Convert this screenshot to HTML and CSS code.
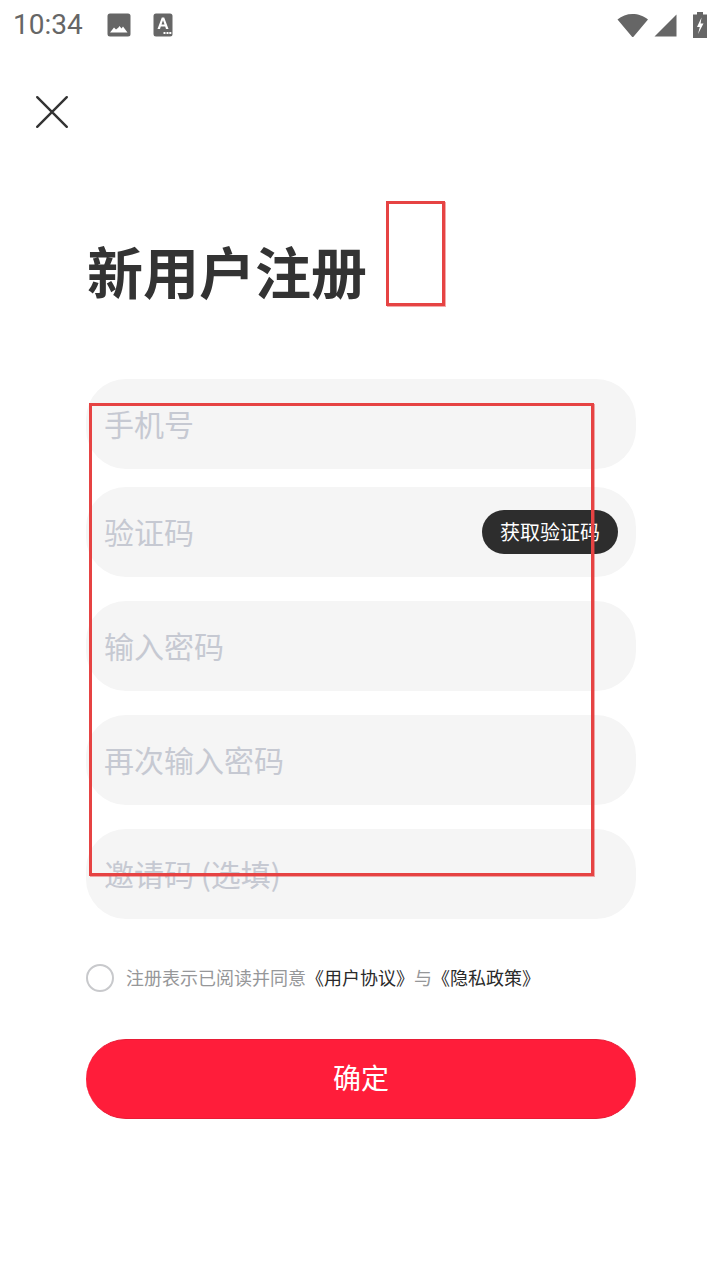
FILE: index.html
```html
<!DOCTYPE html>
<html lang="zh">
<head>
<meta charset="utf-8">
<title>新用户注册</title>
<link rel="stylesheet" href="styles.css">
</head>
<body>
<div class="screen">
  <header class="status">
    <span class="time">10:34</span>
    <svg class="ic-img" viewBox="0 0 24 24"><rect x="0.500" y="0.500" width="23" height="23" rx="2.500" fill="#666"/><path d="M3 19.500l4-5 2 2 2.500-2 1-1.500 2 2.500 1.500-2 4.500 6z" fill="#fff"/></svg>
    <svg class="ic-a" viewBox="0 0 20 24"><rect x="0.500" y="0.500" width="19" height="23" rx="2.500" fill="#666"/><path d="M4.500 16L8.800 4.500h2.400L15.500 16h-2.500l-.8-2.500H7.800L7 16zM8.500 11.500h3L10 7.300z" fill="#fff"/><path d="M10.500 19h2v2h-2zM13.500 19h2v2h-2zM16.300 19h2v2h-2z" fill="#fff"/></svg>
    <span class="status-right">
      <svg class="ic-wifi" viewBox="0 0 32 24"><path d="M0.500 6.500C4.500 3 10 1 15.500 1S27 3 31 6.500L16.700 23.500a1.200 1.200 0 0 1-1.900 0z" fill="#666"/></svg>
      <svg class="ic-signal" viewBox="0 0 23 23"><path d="M22.500 0.500V22.500H0.500z" fill="#666"/></svg>
      <svg class="ic-batt" viewBox="0 0 14 26"><path d="M4 0h6v2.500h4V26H0V2.500h4z" fill="#666"/><path d="M8.500 5.500L4 15h2.800L5 22l5.500-10.500H7.600z" fill="#fff"/></svg>
    </span>
  </header>

  <button class="close" aria-label="关闭">
    <svg viewBox="0 0 34 34"><path d="M2.200 2.200l29.600 29.600M31.800 2.200L2.200 31.800" fill="none" stroke="#333" stroke-width="2.400" stroke-linecap="round"/></svg>
  </button>

  <h1 class="title">新用户注册</h1>

  <form class="form">
    <div class="field"><span class="ph">手机号</span></div>
    <div class="field"><span class="ph">验证码</span><span class="code-btn">获取验证码</span></div>
    <div class="field"><span class="ph">输入密码</span></div>
    <div class="field"><span class="ph">再次输入密码</span></div>
    <div class="field"><span class="ph">邀请码 (选填)</span></div>

    <div class="agree">
      <span class="radio"></span>
      <span class="agree-text">注册表示已阅读并同意<b>《用户协议》</b>与<b>《隐私政策》</b></span>
    </div>
    <div class="submit">确定</div>
  </form>

  <div class="debug debug-a"></div>
  <div class="debug debug-b"></div>
</div>
</body>
</html>
```

FILE: styles.css
```css
* { box-sizing: border-box; }
html, body { margin: 0; padding: 0; background: #fff; }
body { font-family: "Noto Sans CJK SC", "Noto Sans", sans-serif; }
.screen { position: relative; width: 720px; height: 1280px; overflow: hidden; background: #fff; }

.status { display: flex; align-items: center; height: 50px; padding: 0 13px; }
.time { font-family: Roboto, sans-serif; font-size: 28px; color: #666; width: 70px; line-height: 50px; }
.ic-img { width: 24px; height: 24px; margin-left: 24px; }
.ic-a { width: 20px; height: 24px; margin-left: 22px; }
.status-right { margin-left: auto; display: flex; align-items: center; }
.ic-wifi { width: 32px; height: 24px; margin-right: 5px; margin-top: -1px; }
.ic-signal { width: 23px; height: 23px; margin-right: 16px; }
.ic-batt { width: 14px; height: 26px; margin-top: -1px; }

.close { display: block; width: 34px; height: 34px; margin: 45px 0 0 35px; padding: 0; border: 0; background: none; }
.close svg { display: block; width: 34px; height: 34px; }

.title { margin: 101px 0 0 87px; font-size: 56px; line-height: 80px; font-weight: 700; color: #333; }

.form { margin: 69px 0 0 86px; width: 550px; }
.field { display: flex; align-items: center; justify-content: space-between; height: 90px; margin-bottom: 24px; padding: 0 18px; background: #f5f5f5; border-radius: 40px; }
.field:first-child { margin-bottom: 18px; }
.ph { font-size: 30px; line-height: 40px; color: #c6c9d2; margin-top: -3px; }
.code-btn { display: block; width: 136px; height: 44px; border-radius: 22px; background: #2d2d2d; color: #fff; font-size: 20px; line-height: 44px; text-align: center; }

.agree { display: flex; align-items: center; margin-top: 44px; height: 30px; }
.radio { width: 28px; height: 28px; border: 2px solid #c8c9cc; border-radius: 50%; }
.agree-text { margin-left: 12px; font-size: 18px; line-height: 28px; margin-top: -2px; color: #969799; white-space: nowrap; }
.agree-text b { font-weight: 400; color: #2a2a2a; }

.submit { margin-top: 46px; height: 80px; border-radius: 40px; background: #ff1d3a; color: #fff; font-size: 28px; line-height: 74px; text-align: center; border-top: 1px solid #e81c36; border-bottom: 1px solid #e81c36; }

.debug { position: absolute; border: 3px solid #e64343; box-shadow: 1px 1px 0 rgba(230, 67, 67, 0.45); }
.debug-a { left: 386px; top: 201px; width: 59px; height: 105px; }
.debug-b { left: 89px; top: 403px; width: 505px; height: 473px; }
```
